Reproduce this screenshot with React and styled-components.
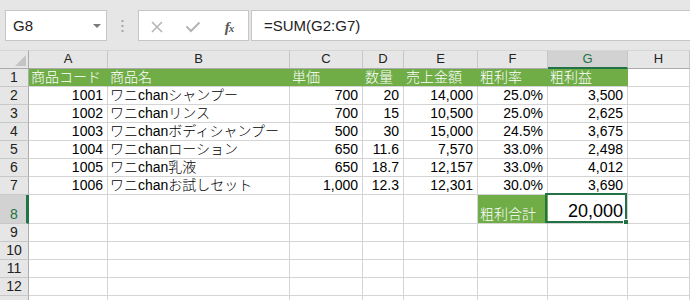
import React from 'react';
import styled, { createGlobalStyle } from 'styled-components';

const GlobalStyle = createGlobalStyle`
  html, body { margin: 0; padding: 0; background: #fff; }
  body { font-family: "Liberation Sans", "Noto Sans CJK JP", sans-serif; }
`;

const Page = styled.div`
  width: 690px;
  height: 300px;
  overflow: hidden;
  background: #fff;
`;

const Toolbar = styled.div`
  height: 50px;
  box-sizing: border-box;
  background: #e6e6e6;
  padding: 10px 0 0 5px;
  display: flex;
  align-items: flex-start;
`;

const NameBox = styled.div`
  width: 102px;
  height: 31px;
  box-sizing: border-box;
  background: #fff;
  border: 1px solid #c6c6c6;
  display: flex;
  align-items: center;
  padding: 0 5px 0 7px;
  font-size: 15px;
  color: #222;
`;

const NameText = styled.span`
  flex: 1;
`;

const Caret = styled.span`
  width: 0;
  height: 0;
  border-left: 4px solid transparent;
  border-right: 4px solid transparent;
  border-top: 4px solid #7a7a7a;
`;

const Separator = styled.div`
  width: 31px;
  height: 31px;
  display: flex;
  align-items: center;
  justify-content: center;
`;

const FxBox = styled.div`
  width: 111px;
  height: 31px;
  box-sizing: border-box;
  background: #fff;
  border: 1px solid #c6c6c6;
  display: flex;
  padding-top: 3px;
`;

const IconSlot = styled.div`
  width: 36px;
  display: flex;
  align-items: center;
  justify-content: center;
`;

const FxLabel = styled.span`
  font-family: "Liberation Serif", serif;
  font-style: italic;
  font-weight: bold;
  color: #555;
  font-size: 15px;
  letter-spacing: -1px;
`;

const FxSub = styled.span`
  font-size: 11px;
`;

const FormulaInput = styled.div`
  flex: 1;
  margin-left: 2px;
  height: 31px;
  box-sizing: border-box;
  background: #fff;
  border: 1px solid #c6c6c6;
  border-right: none;
  display: flex;
  align-items: center;
  padding-left: 12px;
  font-size: 15px;
  color: #222;
`;

const Sheet = styled.div`
  display: grid;
  grid-template-columns: 29px 79px 182px 73px 41px 74px 70px 80px 1fr;
  grid-template-rows: 19px repeat(7, 18px) 29px repeat(6, 18px);
`;

const Corner = styled.div`
  background: #e6e6e6;
  border-right: 1px solid #ababab;
  border-bottom: 1px solid #ababab;
  border-top: 1px solid #d6d6d6;
  box-sizing: border-box;
  display: flex;
  align-items: flex-end;
  justify-content: flex-end;
  padding: 0 2px 2px 0;
`;

const ColHead = styled.div`
  box-sizing: border-box;
  background: ${(p) => (p.$active ? '#d2d2d2' : '#e6e6e6')};
  color: ${(p) => (p.$active ? '#217346' : '#222')};
  border-top: 1px solid #d6d6d6;
  border-right: 1px solid #c6c6c6;
  border-bottom: ${(p) => (p.$active ? '2px solid #217346' : '1px solid #ababab')};
  font-family: "Liberation Sans", sans-serif;
  font-size: 13px;
  line-height: 16px;
  text-align: center;
`;

const RowHead = styled.div`
  box-sizing: border-box;
  background: ${(p) => (p.$active ? '#d2d2d2' : '#e6e6e6')};
  color: ${(p) => (p.$active ? '#217346' : '#222')};
  border-right: ${(p) => (p.$active ? '3px solid #217346' : '1px solid #ababab')};
  border-bottom: 1px solid #c8c8c8;
  font-size: 14px;
  line-height: 17px;
  display: flex;
  align-items: flex-end;
  justify-content: center;
  padding-left: ${(p) => (p.$active ? '2px' : '0')};
`;

const Cell = styled.div`
  position: relative;
  box-sizing: border-box;
  min-width: 0;
  white-space: nowrap;
  border-right: 1px solid ${(p) => (p.$green ? '#70ad47' : '#d4d4d4')};
  border-bottom: 1px solid #d4d4d4;
  background: ${(p) => (p.$green ? '#70ad47' : '#fff')};
  color: ${(p) => (p.$green ? '#fff' : '#000')};
  font-size: ${(p) => (p.$big ? '18px' : '14px')};
  font-weight: 300;
  line-height: ${(p) => (p.$big ? '22px' : '17px')};
  display: flex;
  align-items: flex-end;
  justify-content: ${(p) => (p.$right ? 'flex-end' : 'flex-start')};
  padding: ${(p) => (p.$right ? '0 4px 0 0' : '0 0 0 2px')};
  padding-bottom: ${(p) => (p.$big ? '1px' : '0')};
`;

const Selection = styled.div`
  position: absolute;
  left: -3px;
  top: -2px;
  right: 0;
  bottom: 0;
  border: 2px solid #217346;
  pointer-events: none;
`;

const FillHandle = styled.div`
  position: absolute;
  right: -3px;
  bottom: -3px;
  width: 6px;
  height: 6px;
  background: #217346;
  outline: 1px solid #fff;
`;

const columns = ['A', 'B', 'C', 'D', 'E', 'F', 'G', 'H'];

const header = ['商品コード', '商品名', '単価', '数量', '売上金額', '粗利率', '粗利益'];

const data = [
  ['1001', 'ワニchanシャンプー', '700', '20', '14,000', '25.0%', '3,500'],
  ['1002', 'ワニchanリンス', '700', '15', '10,500', '25.0%', '2,625'],
  ['1003', 'ワニchanボディシャンプー', '500', '30', '15,000', '24.5%', '3,675'],
  ['1004', 'ワニchanローション', '650', '11.6', '7,570', '33.0%', '2,498'],
  ['1005', 'ワニchan乳液', '650', '18.7', '12,157', '33.0%', '4,012'],
  ['1006', 'ワニchanお試しセット', '1,000', '12.3', '12,301', '30.0%', '3,690'],
];

const XIcon = () => (
  <svg width="12" height="12" viewBox="0 0 12 12">
    <path d="M1 1 L11 11 M11 1 L1 11" stroke="#b4b4b4" strokeWidth="1.5" fill="none" />
  </svg>
);

const CheckIcon = () => (
  <svg width="16" height="12" viewBox="0 0 16 12">
    <path d="M1.5 5.5 L6 10 L14.5 1.5" stroke="#b4b4b4" strokeWidth="2" fill="none" />
  </svg>
);

const Dots = () => (
  <svg width="3" height="12" viewBox="0 0 3 12">
    <rect x="0.5" y="0" width="2" height="2" fill="#a6a6a6" />
    <rect x="0.5" y="5" width="2" height="2" fill="#a6a6a6" />
    <rect x="0.5" y="10" width="2" height="2" fill="#a6a6a6" />
  </svg>
);

const CornerTriangle = () => (
  <svg width="11" height="11" viewBox="0 0 11 11">
    <polygon points="11,0 11,11 0,11" fill="#c4c4c4" />
  </svg>
);

export default function App() {
  const emptyRow = (n, label) => (
    <React.Fragment key={n}>
      <RowHead>{label ? n : null}</RowHead>
      {columns.map((c) => (
        <Cell key={c} />
      ))}
    </React.Fragment>
  );

  return (
    <Page>
      <GlobalStyle />
      <Toolbar>
        <NameBox>
          <NameText>G8</NameText>
          <Caret />
        </NameBox>
        <Separator>
          <Dots />
        </Separator>
        <FxBox>
          <IconSlot>
            <XIcon />
          </IconSlot>
          <IconSlot>
            <CheckIcon />
          </IconSlot>
          <IconSlot>
            <FxLabel>
              f<FxSub>x</FxSub>
            </FxLabel>
          </IconSlot>
        </FxBox>
        <FormulaInput>=SUM(G2:G7)</FormulaInput>
      </Toolbar>
      <Sheet>
        <Corner>
          <CornerTriangle />
        </Corner>
        {columns.map((c) => (
          <ColHead key={c} $active={c === 'G'}>
            {c}
          </ColHead>
        ))}

        <RowHead>1</RowHead>
        {header.map((h) => (
          <Cell key={h} $green>
            {h}
          </Cell>
        ))}
        <Cell />

        {data.map((r, i) => (
          <React.Fragment key={r[0]}>
            <RowHead>{i + 2}</RowHead>
            {r.map((v, j) => (
              <Cell key={j} $right={j !== 1}>
                {v}
              </Cell>
            ))}
            <Cell />
          </React.Fragment>
        ))}

        <RowHead $active>8</RowHead>
        <Cell />
        <Cell />
        <Cell />
        <Cell />
        <Cell />
        <Cell $green>粗利合計</Cell>
        <Cell $right $big>
          20,000
          <Selection />
          <FillHandle />
        </Cell>
        <Cell />

        {[9, 10, 11, 12].map((n) => emptyRow(n, true))}
        {[13, 14].map((n) => emptyRow(n, false))}
      </Sheet>
    </Page>
  );
}
